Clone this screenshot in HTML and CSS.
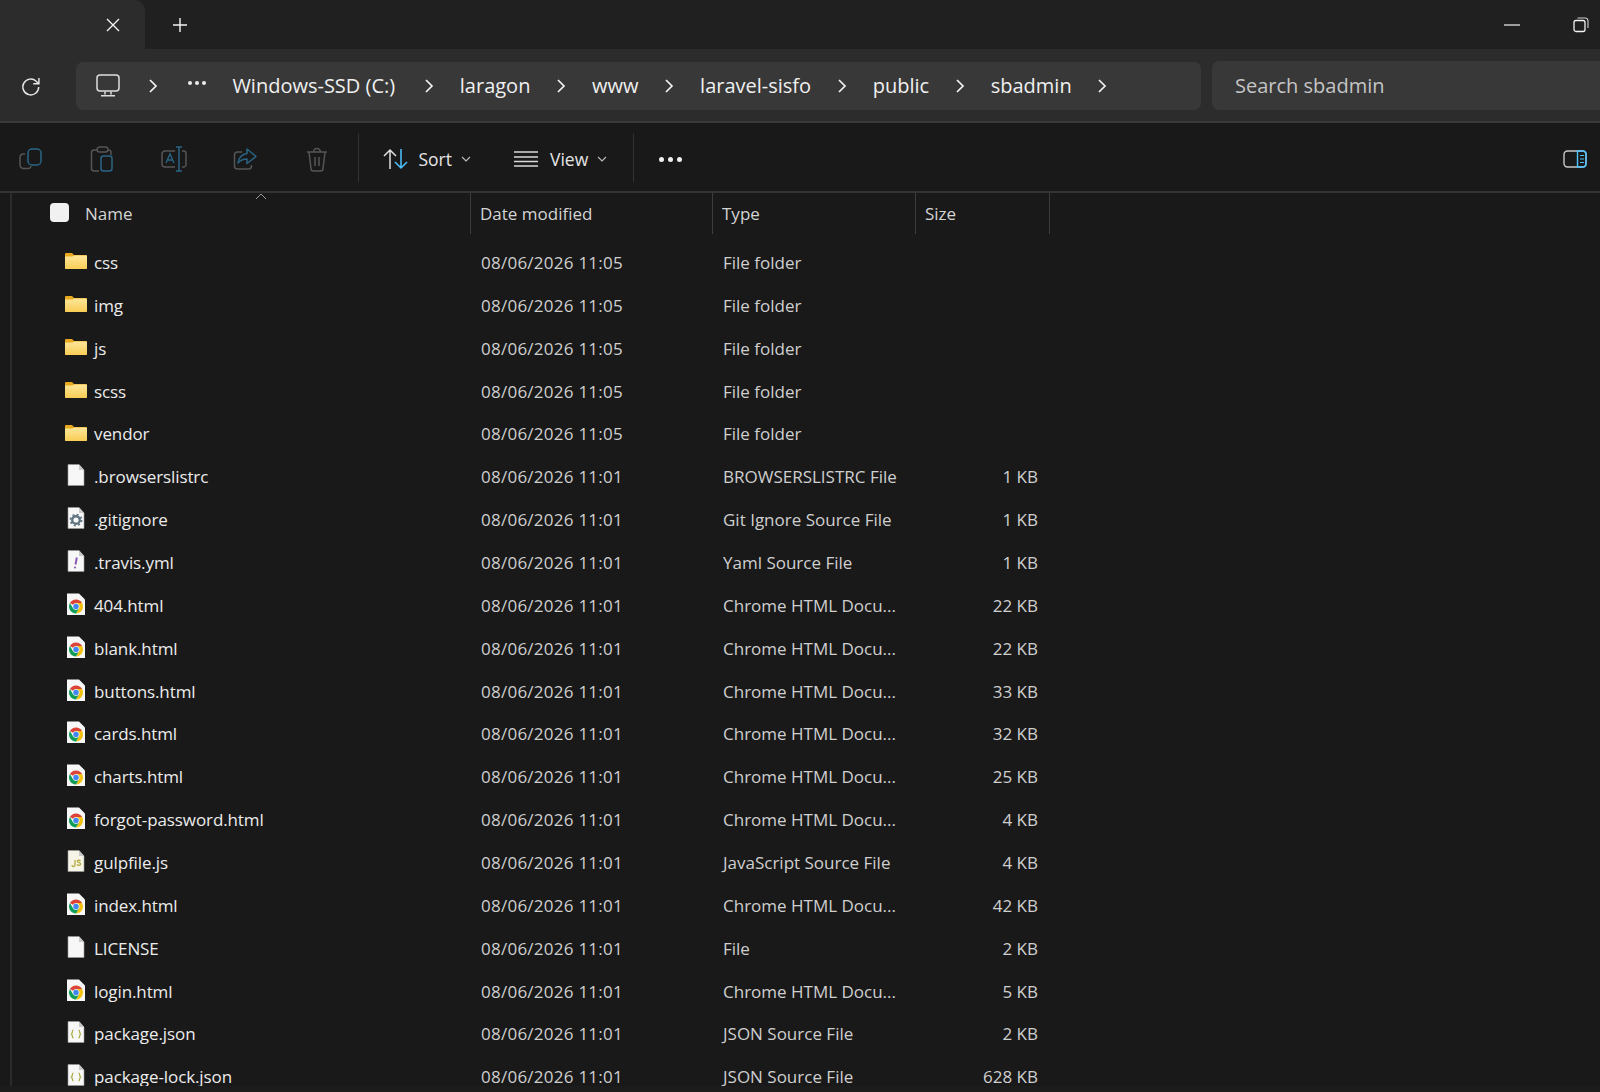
FILE: index.html
```html
<!DOCTYPE html>
<html lang="en">
<head>
    <meta charset="UTF-8">
    <title>sbadmin - File Explorer</title>
    <link rel="stylesheet" href="styles.css">
</head>
<body>

<!-- shared icons -->
<svg class="defs" width="0" height="0">
    <defs>
        <linearGradient id="folder-fill" x1="0" y1="0" x2="0" y2="1">
            <stop offset="0" stop-color="#fde69a"/>
            <stop offset="1" stop-color="#f9cd55"/>
        </linearGradient>
    </defs>
    <symbol id="chev" viewBox="0 0 12 16"><path d="M3 2l6 6-6 6" fill="none" stroke="#f2f2f2" stroke-width="1.700"/></symbol>
    <symbol id="down" viewBox="0 0 10 6"><path d="M1 1l4 4 4-4" fill="none" stroke="#bdbdbd" stroke-width="1.100"/></symbol>
    <symbol id="folder" viewBox="0 0 22 17">
        <path d="M0 2a1 1 0 0 1 1-1h6l2 2h12a1 1 0 0 1 1 1v12a1 1 0 0 1-1 1H1a1 1 0 0 1-1-1z" fill="#e9a91e"/>
        <path d="M0 4.500h7.500l1.500-1h12a1 1 0 0 1 1 1V16a1 1 0 0 1-1 1H1a1 1 0 0 1-1-1z" fill="url(#folder-fill)"/>
    </symbol>
    <symbol id="file" viewBox="0 0 20 22">
        <path d="M2 .5h11L18 6v15.500H2z" fill="#f7f7f7" stroke="#9a9a9a" stroke-width=".6"/>
        <path d="M13 .5V6h5" fill="#c9c9c9"/>
    </symbol>
    <symbol id="gear" viewBox="0 0 20 22">
        <use href="#file" width="20" height="22"/>
        <circle cx="10" cy="13" r="3.800" fill="none" stroke="#5f7480" stroke-width="2.400"/>
        <circle cx="10" cy="13" r="5.600" fill="none" stroke="#5f7480" stroke-width="1.600" stroke-dasharray="2 2.400"/>
    </symbol>
    <symbol id="yml" viewBox="0 0 20 22">
        <use href="#file" width="20" height="22"/>
        <path d="M10.800 7.500l-1.300 7" stroke="#8d5bb5" stroke-width="2"/>
        <circle cx="9" cy="17.500" r="1.100" fill="#8d5bb5"/>
    </symbol>
    <symbol id="chrome" viewBox="0 0 20 22">
        <path d="M1 .5h12l6 6V22H1z" fill="#f7f7f7"/>
        <path d="M10 6.500a7 7 0 0 1 6.060 3.500H10a3.500 3.500 0 0 0-3.030 1.750L3.940 10A7 7 0 0 1 10 6.500z" fill="#db4437"/>
        <path d="M16.060 10a7 7 0 0 1-6.060 10.500l3.030-5.250A3.500 3.500 0 0 0 10 10z" fill="#f4c20d"/>
        <path d="M3.940 10l3.030 5.250A3.500 3.500 0 0 0 13.030 15.250L10 20.500A7 7 0 0 1 3.940 10z" fill="#0f9d58"/>
        <circle cx="10" cy="13.500" r="2.700" fill="#4285f4"/>
    </symbol>
    <symbol id="js" viewBox="0 0 20 22">
        <path d="M2 .5h11L18 6v15.500H2z" fill="#f5f4e6" stroke="#9a9a9a" stroke-width=".6"/>
        <path d="M13 .5V6h5" fill="#c9c9c9"/>
        <path d="M9 10v5a1.500 1.500 0 0 1-3 0M14.500 10.800c-.6-1-3.200-1.100-3.200.4s3.300 1 3.300 2.800-2.800 1.700-3.600.4" fill="none" stroke="#b5a93c" stroke-width="1.300"/>
    </symbol>
    <symbol id="json" viewBox="0 0 20 22">
        <use href="#file" width="20" height="22"/>
        <path d="M7.500 9c-1.700 0-.7 3-2 4 1.300 1 .3 4 2 4M12.500 9c1.700 0 .7 3 2 4-1.300 1-.3 4-2 4" fill="none" stroke="#a9a83a" stroke-width="1.200"/>
    </symbol>
</svg>

<div class="titlebar">
    <div class="tab">
        <svg class="tab-x" width="16" height="16" viewBox="0 0 16 16"><path d="M2 2l12 12M14 2L2 14" stroke="#f2f2f2" stroke-width="1.400"/></svg>
    </div>
    <svg class="tab-plus" width="16" height="16" viewBox="0 0 16 16"><path d="M8 1v14M1 8h14" stroke="#f2f2f2" stroke-width="1.400"/></svg>
    <div class="winbtns">
        <svg width="16" height="2" viewBox="0 0 16 2"><path d="M0 1h16" stroke="#f2f2f2" stroke-width="1.200"/></svg>
        <svg width="16" height="16" viewBox="0 0 16 16"><rect x="1" y="3.500" width="11" height="11" rx="2" fill="none" stroke="#f2f2f2" stroke-width="1.300"/><path d="M4.500 1h7.500a3 3 0 0 1 3 3v7" fill="none" stroke="#cfcfcf" stroke-width="1.100"/></svg>
    </div>
</div>

<div class="navbar">
    <svg class="refresh" width="22" height="22" viewBox="0 0 20 20"><path d="M17 10a7.200 7.200 0 1 1-2.300-5.300L17 7M17.200 1.800V7H12" fill="none" stroke="#e8e8e8" stroke-width="1.300"/></svg>
    <div class="crumbs">
        <svg class="monitor" width="24" height="23" viewBox="0 0 24 23"><rect x="1" y="1" width="22" height="16" rx="3" fill="none" stroke="#dedede" stroke-width="1.500"/><path d="M9 17.500v3M15 17.500v3M5 21.800h14" stroke="#dedede" stroke-width="1.500"/></svg>
        <svg class="chev chev-first"><use href="#chev"/></svg>
        <div class="more"><i></i><i></i><i></i></div>
        <span class="drive">Windows-SSD (C:)</span>
        <svg class="chev"><use href="#chev"/></svg>
        <span>laragon</span>
        <svg class="chev"><use href="#chev"/></svg>
        <span>www</span>
        <svg class="chev"><use href="#chev"/></svg>
        <span>laravel-sisfo</span>
        <svg class="chev"><use href="#chev"/></svg>
        <span>public</span>
        <svg class="chev"><use href="#chev"/></svg>
        <span>sbadmin</span>
        <svg class="chev"><use href="#chev"/></svg>
    </div>
    <div class="search">Search sbadmin</div>
</div>

<div class="toolbar">
    <div class="tool">
        <svg width="24" height="24" viewBox="0 0 24 24"><path d="M6 7H4a3 3 0 0 0-3 3v8a3.500 3.500 0 0 0 3.500 3.500H9a3 3 0 0 0 3-2.500" fill="none" stroke="#555" stroke-width="1.500"/><rect x="9" y="2" width="13" height="16" rx="4" fill="none" stroke="#2a6484" stroke-width="1.500"/></svg>
    </div>
    <div class="tool">
        <svg width="24" height="26" viewBox="0 0 24 26"><path d="M8 4H4a2.500 2.500 0 0 0-2.500 2.500v16A2.500 2.500 0 0 0 4 25h5M18 4h1a2.500 2.500 0 0 1 2 2.500V9" fill="none" stroke="#555" stroke-width="1.500"/><rect x="7" y="1" width="11" height="5" rx="2.500" fill="none" stroke="#555" stroke-width="1.400"/><rect x="11" y="10" width="11" height="15" rx="2.500" fill="none" stroke="#2a6484" stroke-width="1.500"/></svg>
    </div>
    <div class="tool">
        <svg width="26" height="26" viewBox="0 0 26 26"><path d="M14 5H4a3 3 0 0 0-3 3v10a3 3 0 0 0 3 3h10M21 5h1.500A2.500 2.500 0 0 1 25 7.500v11a2.500 2.500 0 0 1-2.500 2.500H21" fill="none" stroke="#555" stroke-width="1.500"/><path d="M15 1h6M18 1v24M15 25h6" stroke="#2a6484" stroke-width="1.500"/><path d="M5 17l4-9 4 9M6.500 14h5" fill="none" stroke="#2a6484" stroke-width="1.400"/></svg>
    </div>
    <div class="tool">
        <svg width="24" height="24" viewBox="0 0 24 24"><path d="M9 5H4.500A3 3 0 0 0 1.500 8v11A3 3 0 0 0 4.500 22h11a3 3 0 0 0 3-3v-1" fill="none" stroke="#555" stroke-width="1.500"/><path d="M14 2l9 7.500-9 7V12c-4 0-6.500 1-9 4 .5-5 4-9 9-9.500z" fill="none" stroke="#2a6484" stroke-width="1.500" stroke-linejoin="round"/></svg>
    </div>
    <div class="tool">
        <svg width="22" height="25" viewBox="0 0 22 25"><path d="M1 5h20M3 5l2 16.500a2.500 2.500 0 0 0 2.500 2.500h7a2.500 2.500 0 0 0 2.500-2.500L19 5M7.500 5a3.500 3.500 0 0 1 7 0M9 10v9M13 10v9" fill="none" stroke="#555" stroke-width="1.500"/></svg>
    </div>
    <div class="tool-sep"></div>
    <div class="menu menu-sort">
        <svg width="26" height="22" viewBox="0 0 26 22"><path d="M7 21V2M1 8l6-6 6 6" fill="none" stroke="#e0e0e0" stroke-width="1.500"/><path d="M18 1v19M12 14l6 6 6-6" fill="none" stroke="#4cc2ff" stroke-width="1.500"/></svg>
        <span>Sort</span>
        <svg class="down"><use href="#down"/></svg>
    </div>
    <div class="menu menu-view">
        <svg width="24" height="16" viewBox="0 0 24 16"><path d="M0 1h24M0 6h24M0 10.500h24M0 15h24" stroke="#d8d8d8" stroke-width="1.300"/></svg>
        <span>View</span>
        <svg class="down"><use href="#down"/></svg>
    </div>
    <div class="tool-sep"></div>
    <div class="dots"><i></i><i></i><i></i></div>
    <svg class="panel" width="24" height="18" viewBox="0 0 24 18"><rect x="1" y="1" width="22" height="16" rx="3.500" fill="none" stroke="#c8c8c8" stroke-width="1.400"/><path d="M14.500 1H20a3 3 0 0 1 3 3v10a3 3 0 0 1-3 3h-5.500z" fill="none" stroke="#4cc2ff" stroke-width="1.400"/><path d="M17 5.500h4M17 9h4M17 12.500h4" stroke="#4cc2ff" stroke-width="1.200"/></svg>
</div>

<div class="content">
    <div class="head">
        <div class="head-name">
            <span class="check"></span>
            <span>Name</span>
            <svg class="sort-caret" width="12" height="7" viewBox="0 0 12 7"><path d="M1 6l5-5 5 5" fill="none" stroke="#9a9a9a" stroke-width="1"/></svg>
        </div>
        <div class="head-cell">Date modified</div>
        <div class="head-cell">Type</div>
        <div class="head-cell">Size</div>
    </div>

    <div class="row"><div class="name"><svg class="ico-folder"><use href="#folder"/></svg>css</div><div class="cell date">08/06/2026 11:05</div><div class="cell">File folder</div><div class="size"></div></div>
    <div class="row"><div class="name"><svg class="ico-folder"><use href="#folder"/></svg>img</div><div class="cell date">08/06/2026 11:05</div><div class="cell">File folder</div><div class="size"></div></div>
    <div class="row"><div class="name"><svg class="ico-folder"><use href="#folder"/></svg>js</div><div class="cell date">08/06/2026 11:05</div><div class="cell">File folder</div><div class="size"></div></div>
    <div class="row"><div class="name"><svg class="ico-folder"><use href="#folder"/></svg>scss</div><div class="cell date">08/06/2026 11:05</div><div class="cell">File folder</div><div class="size"></div></div>
    <div class="row"><div class="name"><svg class="ico-folder"><use href="#folder"/></svg>vendor</div><div class="cell date">08/06/2026 11:05</div><div class="cell">File folder</div><div class="size"></div></div>
    <div class="row"><div class="name"><svg class="ico"><use href="#file"/></svg>.browserslistrc</div><div class="cell date">08/06/2026 11:01</div><div class="cell">BROWSERSLISTRC File</div><div class="size">1 KB</div></div>
    <div class="row"><div class="name"><svg class="ico"><use href="#gear"/></svg>.gitignore</div><div class="cell date">08/06/2026 11:01</div><div class="cell">Git Ignore Source File</div><div class="size">1 KB</div></div>
    <div class="row"><div class="name"><svg class="ico"><use href="#yml"/></svg>.travis.yml</div><div class="cell date">08/06/2026 11:01</div><div class="cell">Yaml Source File</div><div class="size">1 KB</div></div>
    <div class="row"><div class="name"><svg class="ico"><use href="#chrome"/></svg>404.html</div><div class="cell date">08/06/2026 11:01</div><div class="cell">Chrome HTML Docu...</div><div class="size">22 KB</div></div>
    <div class="row"><div class="name"><svg class="ico"><use href="#chrome"/></svg>blank.html</div><div class="cell date">08/06/2026 11:01</div><div class="cell">Chrome HTML Docu...</div><div class="size">22 KB</div></div>
    <div class="row"><div class="name"><svg class="ico"><use href="#chrome"/></svg>buttons.html</div><div class="cell date">08/06/2026 11:01</div><div class="cell">Chrome HTML Docu...</div><div class="size">33 KB</div></div>
    <div class="row"><div class="name"><svg class="ico"><use href="#chrome"/></svg>cards.html</div><div class="cell date">08/06/2026 11:01</div><div class="cell">Chrome HTML Docu...</div><div class="size">32 KB</div></div>
    <div class="row"><div class="name"><svg class="ico"><use href="#chrome"/></svg>charts.html</div><div class="cell date">08/06/2026 11:01</div><div class="cell">Chrome HTML Docu...</div><div class="size">25 KB</div></div>
    <div class="row"><div class="name"><svg class="ico"><use href="#chrome"/></svg>forgot-password.html</div><div class="cell date">08/06/2026 11:01</div><div class="cell">Chrome HTML Docu...</div><div class="size">4 KB</div></div>
    <div class="row"><div class="name"><svg class="ico"><use href="#js"/></svg>gulpfile.js</div><div class="cell date">08/06/2026 11:01</div><div class="cell">JavaScript Source File</div><div class="size">4 KB</div></div>
    <div class="row"><div class="name"><svg class="ico"><use href="#chrome"/></svg>index.html</div><div class="cell date">08/06/2026 11:01</div><div class="cell">Chrome HTML Docu...</div><div class="size">42 KB</div></div>
    <div class="row"><div class="name"><svg class="ico"><use href="#file"/></svg>LICENSE</div><div class="cell date">08/06/2026 11:01</div><div class="cell">File</div><div class="size">2 KB</div></div>
    <div class="row"><div class="name"><svg class="ico"><use href="#chrome"/></svg>login.html</div><div class="cell date">08/06/2026 11:01</div><div class="cell">Chrome HTML Docu...</div><div class="size">5 KB</div></div>
    <div class="row"><div class="name"><svg class="ico"><use href="#json"/></svg>package.json</div><div class="cell date">08/06/2026 11:01</div><div class="cell">JSON Source File</div><div class="size">2 KB</div></div>
    <div class="row"><div class="name"><svg class="ico"><use href="#json"/></svg>package-lock.json</div><div class="cell date">08/06/2026 11:01</div><div class="cell">JSON Source File</div><div class="size">628 KB</div></div>
</div>
<div class="statusbar"></div>

</body>
</html>
```
FILE: styles.css
```css
html, body {
    margin: 0;
    height: 1092px;
    overflow: hidden;
    background-color: #191919;
}
body {
    font-family: "Open Sans", "Noto Sans", sans-serif;
    color: #e8e8e8;
}
.defs {
    position: absolute;
}

/* title bar */
.titlebar {
    display: flex;
    align-items: center;
    height: 49px;
    background-color: #202020;
}
.tab {
    display: flex;
    align-items: center;
    justify-content: flex-end;
    width: 145px;
    height: 49px;
    box-sizing: border-box;
    padding-right: 24px;
    background-color: #2c2c2c;
    border-radius: 0 10px 0 0;
}
.tab-plus {
    margin-left: 27px;
}
.winbtns {
    display: flex;
    align-items: center;
    gap: 53px;
    margin-left: auto;
    margin-right: 11px;
}

/* address bar */
.navbar {
    display: flex;
    align-items: center;
    height: 72px;
    background-color: #2c2c2c;
    border-bottom: 2px solid #3a3a3a;
}
.refresh {
    margin-left: 20px;
    margin-right: 34px;
    margin-top: 3px;
}
.crumbs {
    display: flex;
    align-items: center;
    gap: 24.800px;
    width: 1125px;
    height: 48px;
    box-sizing: border-box;
    margin-top: 1px;
    padding-left: 20px;
    background-color: #383838;
    border-radius: 7px;
    font-size: 20px;
    color: #f0f0f0;
}
.chev {
    width: 12px;
    height: 16px;
}
.chev-first {
    margin-left: 2px;
    margin-right: 4px;
}
.more {
    display: flex;
    gap: 3px;
    margin-top: -5px;
    margin-right: 2px;
}
.more i {
    width: 4px;
    height: 4px;
    border-radius: 50%;
    background-color: #ececec;
}
.drive {
    margin-right: 3px;
}
.search {
    flex: 1;
    height: 49px;
    line-height: 50px;
    margin-left: 11px;
    padding-left: 23px;
    background-color: #383838;
    border-radius: 7px 0 0 7px;
    font-size: 20px;
    color: #c5c5c5;
}

/* command bar */
.toolbar {
    display: flex;
    align-items: center;
    height: 70px;
    box-sizing: border-box;
    padding-top: 4px;
    background-color: #191919;
    border-bottom: 2px solid #333;
}
.tool {
    display: flex;
    align-items: center;
    justify-content: center;
    width: 71.500px;
    height: 30px;
}
.tool:first-child {
    margin-left: -5px;
}
.tool-sep {
    width: 1px;
    height: 48px;
    margin-left: 5px;
    margin-top: -2px;
    background-color: #333;
}
.menu {
    display: flex;
    align-items: center;
    font-size: 17.500px;
    color: #e4e4e4;
}
.menu-sort {
    margin-left: 24px;
    gap: 10px;
}
.menu-sort .down {
    margin-left: -1px;
}
.menu-view {
    margin-left: 43px;
    gap: 12px;
}
.down {
    width: 10px;
    height: 6px;
}
.menu-view .down {
    margin-left: -3px;
}
.menu-view + .tool-sep {
    margin-left: 26px;
}
.dots {
    display: flex;
    gap: 4px;
    margin-left: 25px;
}
.dots i {
    width: 5px;
    height: 5px;
    border-radius: 50%;
    background-color: #f0f0f0;
}
.panel {
    margin-left: auto;
    margin-right: 13px;
}

/* file list */
.content {
    height: 893px;
    margin-left: 10px;
    border-left: 2px solid #2b2b2b;
    overflow: hidden;
}
.head, .row {
    display: grid;
    grid-template-columns: 458px 242px 203px 135px;
}
.head {
    height: 41px;
    margin-bottom: 7.500px;
    font-size: 17px;
    color: #d4d4d4;
}
.head-name {
    position: relative;
    display: flex;
    align-items: center;
    gap: 16px;
    padding-left: 38px;
}
.head-name span:nth-child(2), .head-cell {
    padding-bottom: 1px;
}
.check {
    width: 19px;
    height: 19px;
    margin-top: -3px;
    border-radius: 4px;
    background-color: #f1f1f1;
}
.sort-caret {
    position: absolute;
    left: 243px;
    top: 0;
}
.head-cell {
    display: flex;
    align-items: center;
    padding-left: 9px;
    border-left: 1px solid #3d3d3d;
}
.head-cell:last-child {
    border-right: 1px solid #3d3d3d;
}
.row {
    height: 42.860px;
    align-items: center;
    font-size: 17px;
    color: #cfcfcf;
}
.row > div {
    padding-bottom: 1px;
}
.name {
    display: flex;
    align-items: center;
    padding-left: 53px;
    letter-spacing: -0.1px;
    color: #ececec;
}
.ico-folder {
    width: 22px;
    height: 17px;
    margin-right: 7px;
    margin-top: -3px;
}
.ico {
    width: 20px;
    height: 22px;
    margin-left: 1px;
    margin-right: 8px;
    margin-top: -3px;
}
.cell {
    padding-left: 11px;
    white-space: nowrap;
}
.date {
    letter-spacing: .25px;
}
.size {
    padding-right: 12px;
    text-align: right;
}
.statusbar {
    height: 7px;
    background-color: #1c1c1c;
}
```
